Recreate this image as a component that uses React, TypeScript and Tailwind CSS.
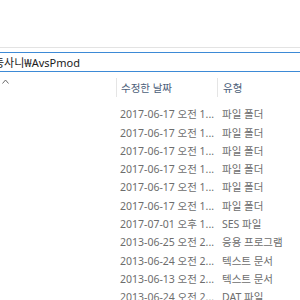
import React from 'react';

const rows: [string, string][] = [
  ['2017-06-17 오전 1...', '파일 폴더'],
  ['2017-06-17 오전 1...', '파일 폴더'],
  ['2017-06-17 오전 1...', '파일 폴더'],
  ['2017-06-17 오전 1...', '파일 폴더'],
  ['2017-06-17 오전 1...', '파일 폴더'],
  ['2017-06-17 오전 1...', '파일 폴더'],
  ['2017-07-01 오후 1...', 'SES 파일'],
  ['2013-06-25 오전 2...', '응용 프로그램'],
  ['2013-06-24 오전 2...', '텍스트 문서'],
  ['2013-06-13 오전 2...', '텍스트 문서'],
  ['2013-06-24 오전 2...', 'DAT 파일'],
];

export default function App() {
  return (
    <div
      className="w-[300px] h-[300px] overflow-hidden bg-white flex flex-col"
      style={{ fontFamily: '"Noto Sans", "Noto Sans CJK KR", sans-serif' }}
    >
      <div className="h-[47px] shrink-0" />
      <div className="h-px bg-[#e3e3e3] shrink-0" />
      <div className="h-[4px] shrink-0" />

      {/* address bar */}
      <div className="h-[20px] shrink-0 border-y border-[#3d8ad6] flex items-center overflow-hidden">
        <span className="-ml-[6px] whitespace-nowrap text-[11px] text-[#1a1a1a] leading-none">
          동사니₩AvsPmod
        </span>
      </div>

      {/* column headers */}
      <div className="h-[34px] shrink-0 flex pt-[6px] pb-[9px]">
        <div className="w-[116px] relative">
          <svg className="absolute left-[2px] top-[1px]" width="7" height="5" viewBox="0 0 7 5">
            <path d="M0.5 4.5 L3.5 1 L6.5 4.5" fill="none" stroke="#6a6a6a" strokeWidth="1" />
          </svg>
        </div>
        <div className="w-[101px] border-l border-[#e5e5e5] pl-[4px] pt-[2px] flex items-center text-[10.5px] text-[#4c607a]">
          수정한 날짜
        </div>
        <div className="flex-1 border-l border-[#e5e5e5] pl-[5px] pt-[2px] flex items-center text-[10.5px] text-[#4c607a]">
          유형
        </div>
      </div>

      {/* rows */}
      <div className="flex flex-col">
        {rows.map(([date, type], i) => (
          <div key={i} className="h-[18.3px] shrink-0 flex items-center text-[10.5px] text-[#6d6d6d] whitespace-nowrap">
            <div className="w-[120px]" />
            <div className="w-[102px]">{date}</div>
            <div>{type}</div>
          </div>
        ))}
      </div>
    </div>
  );
}
